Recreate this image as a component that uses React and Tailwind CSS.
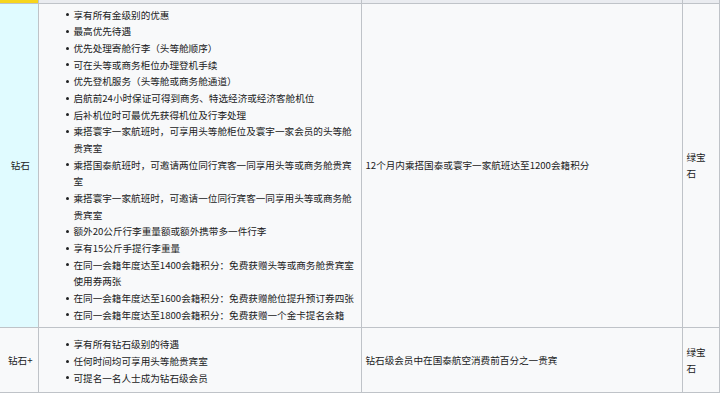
import React from 'react';

const diamondPerks = [
  '享有所有金级别的优惠',
  '最高优先待遇',
  '优先处理寄舱行李（头等舱顺序）',
  '可在头等或商务柜位办理登机手续',
  '优先登机服务（头等舱或商务舱通道）',
  '启航前24小时保证可得到商务、特选经济或经济客舱机位',
  '后补机位时可最优先获得机位及行李处理',
  '乘搭寰宇一家航班时，可享用头等舱柜位及寰宇一家会员的头等舱贵宾室',
  '乘搭国泰航班时，可邀请两位同行宾客一同享用头等或商务舱贵宾室',
  '乘搭寰宇一家航班时，可邀请一位同行宾客一同享用头等或商务舱贵宾室',
  '额外20公斤行李重量额或额外携带多一件行李',
  '享有15公斤手提行李重量',
  '在同一会籍年度达至1400会籍积分：免费获赠头等或商务舱贵宾室使用券两张',
  '在同一会籍年度达至1600会籍积分：免费获赠舱位提升预订券四张',
  '在同一会籍年度达至1800会籍积分：免费获赠一个金卡提名会籍',
];

const diamondPlusPerks = [
  '享有所有钻石级别的待遇',
  '任何时间均可享用头等舱贵宾室',
  '可提名一名人士成为钻石级会员',
];

const PerkList = ({ items }) => (
  <ul className="w-[292px]">
    {items.map((item) => (
      <li key={item} className="flex">
        <span className="flex h-[16.67px] w-[8px] shrink-0 items-center">
          <span className="h-[3px] w-[3px] rounded-full bg-[#202122]" />
        </span>
        <span>{item}</span>
      </li>
    ))}
  </ul>
);

export default function App() {
  return (
    <div
      className="h-[393px] w-[720px] overflow-hidden bg-white text-[9.6px] leading-[16.67px] text-[#202122]"
      style={{ fontFamily: '"Noto Sans CJK SC", "Noto Sans", sans-serif' }}
    >
      <table className="w-[719px] table-fixed border-collapse">
        <colgroup>
          <col className="w-[38px]" />
          <col className="w-[323px]" />
          <col className="w-[321px]" />
          <col className="w-[37px]" />
        </colgroup>
        <tbody>
          {/* tail of the header row */}
          <tr className="h-[3px]">
            <td className="border-b border-[#bfc3c8] bg-[#f7d51d] p-0" />
            <td className="border border-t-0 border-[#bfc3c8] bg-[#eaecf0] p-0" />
            <td className="border border-t-0 border-[#bfc3c8] bg-[#eaecf0] p-0" />
            <td className="border border-t-0 border-[#bfc3c8] bg-[#eaecf0] p-0" />
          </tr>

          <tr>
            <td className="border-r border-b border-[#bfc3c8] bg-[#e0fbff] pl-[3px] text-center align-middle">
              钻石
            </td>
            <td className="border border-[#bfc3c8] bg-[#f8f9fa] pt-[3px] pr-[1px] pb-[4px] pl-[27px] align-top">
              <PerkList items={diamondPerks} />
            </td>
            <td className="border border-[#bfc3c8] bg-[#f8f9fa] px-[4px] align-middle">
              12个月内乘搭国泰或寰宇一家航班达至1200会籍积分
            </td>
            <td className="border border-[#bfc3c8] bg-[#f8f9fa] pr-[5px] pl-[4px] align-middle leading-[16px]">
              绿宝石
            </td>
          </tr>

          <tr>
            <td className="border-r border-b border-[#bfc3c8] bg-[#f8f9fa] pl-[3px] text-center align-middle">
              钻石+
            </td>
            <td className="border border-[#bfc3c8] bg-[#f8f9fa] pt-[8px] pr-[1px] pb-[6px] pl-[27px] align-top">
              <PerkList items={diamondPlusPerks} />
            </td>
            <td className="border border-[#bfc3c8] bg-[#f8f9fa] px-[4px] align-middle">
              钻石级会员中在国泰航空消费前百分之一贵宾
            </td>
            <td className="border border-[#bfc3c8] bg-[#f8f9fa] pr-[5px] pl-[4px] align-middle leading-[16px]">
              绿宝石
            </td>
          </tr>
        </tbody>
      </table>
    </div>
  );
}
